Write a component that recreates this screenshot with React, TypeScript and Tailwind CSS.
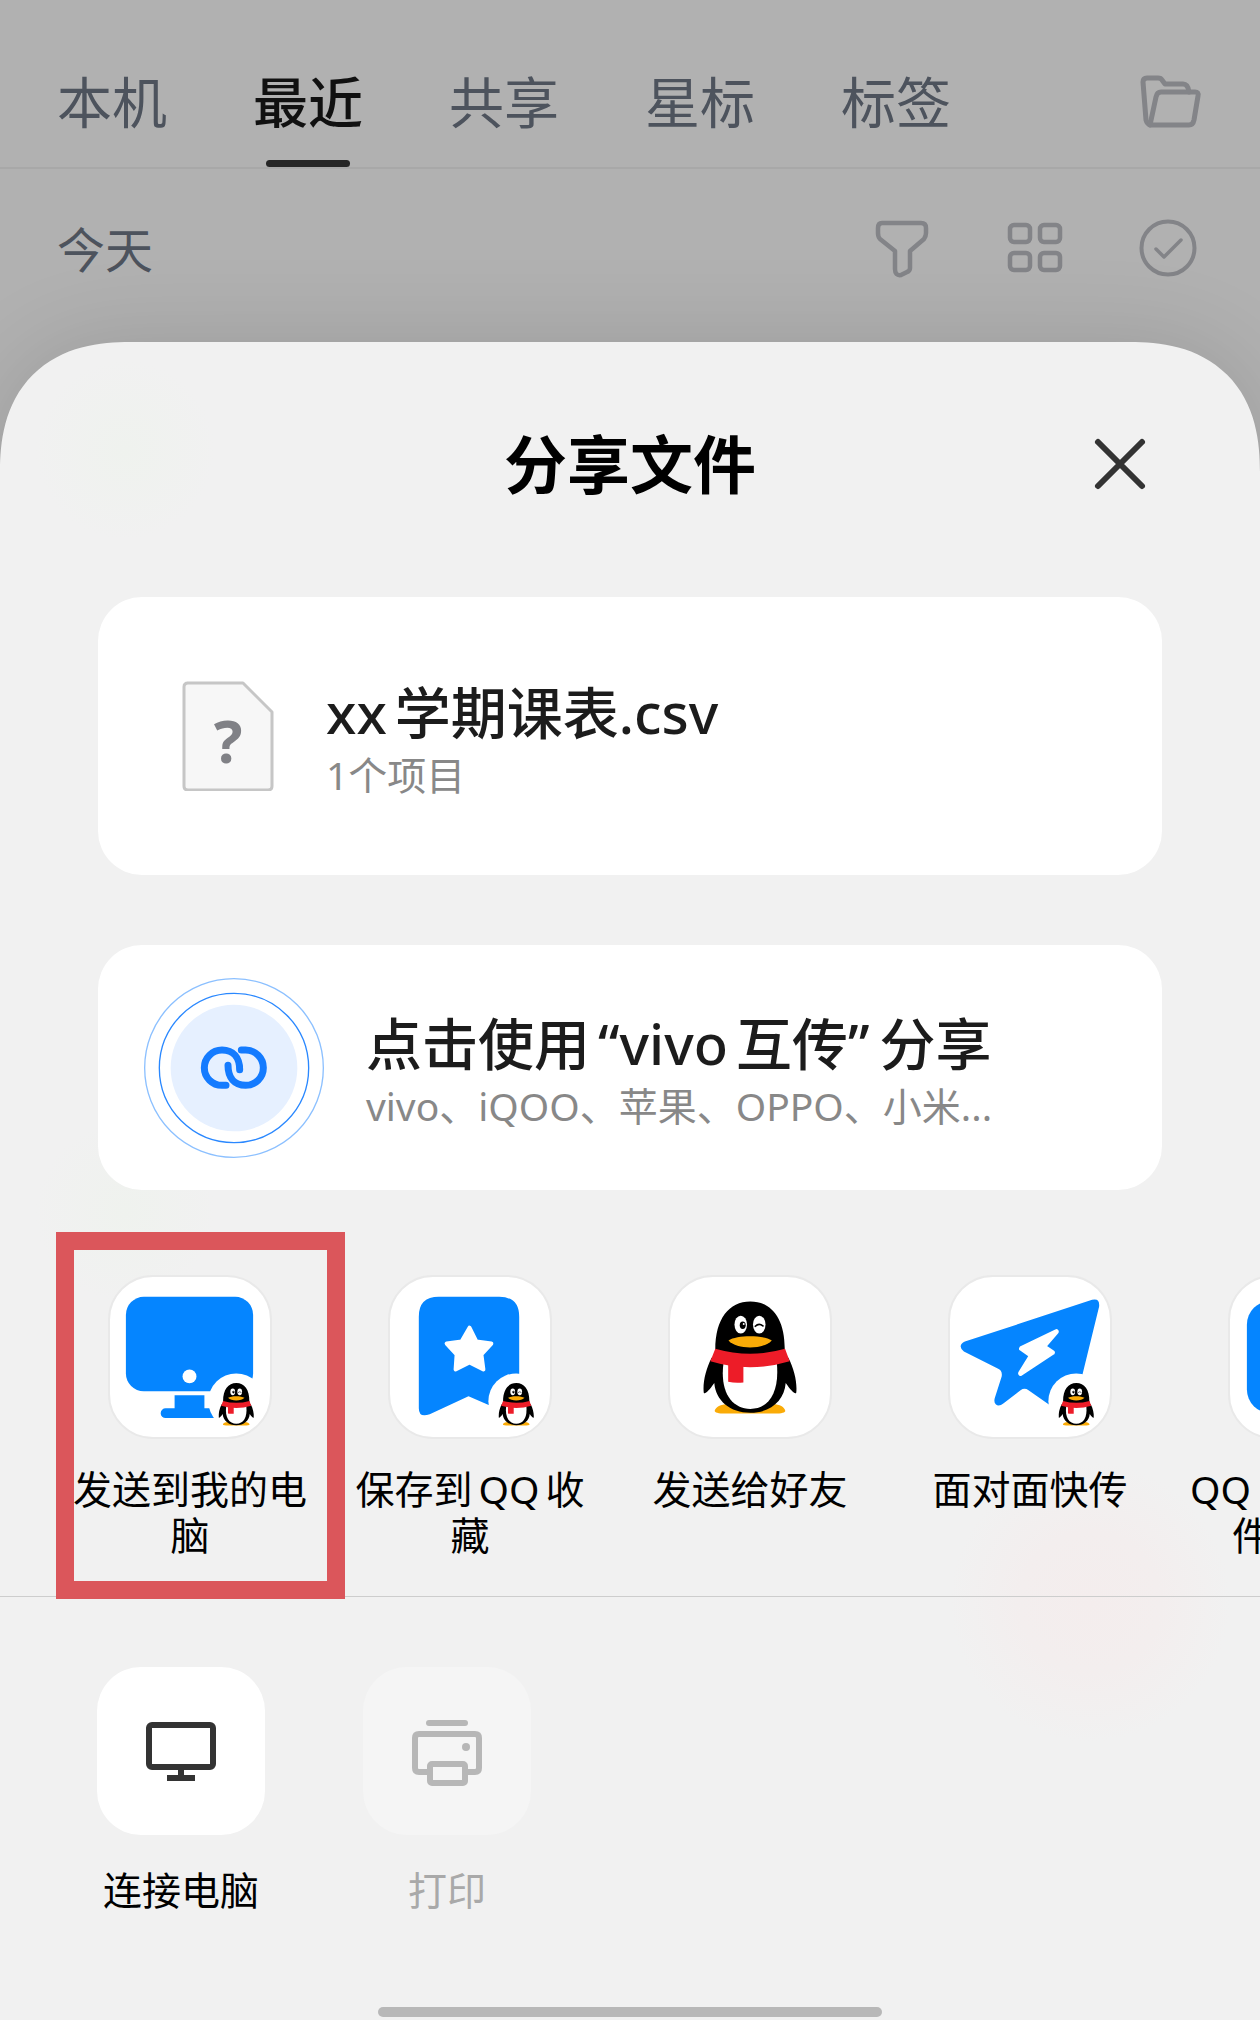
import * as React from "react";

interface ShareTarget {
  id: string;
  label: React.ReactNode;
  icon: React.FC;
  highlighted?: boolean;
}

const PenguinShape: React.FC = () => (
  <>
    <path d="M223 486C226 474 242 466 262 466L331 486L400 466C420 466 434 474 437 486C434 493 420 494 395 494H265C240 494 226 493 223 486Z" fill="#faab07" />
    <path d="M214 325C196 360 187 400 190 430C192 438 204 428 222 402C226 455 270 492 331 492S434 455 438 402C456 428 468 438 470 430C473 400 464 360 446 325Z" fill="#000" />
    <path d="M225 300C225 208 266 155 331 155S436 208 435 300L440 335H220Z" fill="#000" />
    <path d="M250 340H411C420 428 388 480 331 480S238 428 250 340Z" fill="#fff" />
    <ellipse cx="302" cy="225" rx="19" ry="27" fill="#fff" />
    <ellipse cx="358" cy="225" rx="19" ry="27" fill="#fff" />
    <ellipse cx="308" cy="227" rx="9" ry="11" fill="#000" />
    <circle cx="311" cy="223" r="3" fill="#fff" />
    <path d="M346 230Q357 219 369 229" fill="none" stroke="#000" strokeWidth="5" strokeLinecap="round" />
    <path d="M265 273C290 256 370 256 396 273C370 301 290 301 265 273Z" fill="#faab07" />
    <path d="M225 298Q331 328 436 298L450 336Q331 372 210 336Z" fill="#ed1c28" />
    <path d="M264 345H310V400Q286 403 264 398Z" fill="#ed1c28" />
  </>
);

const PenguinBadge: React.FC = () => (
  <>
    <circle cx="128" cy="126" r="28" fill="#fff" />
    <svg x="110" y="107" width="36" height="44" viewBox="187 153 286 343">
      <PenguinShape />
    </svg>
  </>
);

const ComputerIcon: React.FC = () => (
  <svg viewBox="0 0 163 163" className="size-full">
    <rect x="17" y="21" width="128" height="95" rx="18" fill="#0585ff" />
    <circle cx="81" cy="101" r="7" fill="#fff" />
    <path d="M66 120H96V133H112V143H57A5 5 0 0 1 57 133H66Z" fill="#0585ff" />
    <PenguinBadge />
  </svg>
);

const BookmarkIcon: React.FC = () => (
  <svg viewBox="0 0 163 163" className="size-full">
    <path d="M50 21H111Q131 21 131 41V134Q131 142 124 140L80 121L41 139Q30 143 30 133V41Q30 21 50 21Z" fill="#0585ff" />
    <path d="M81 52L88 66L103 68L93 79L95 94L81 87L67 94L68 79L58 68L73 66Z" fill="#fff" stroke="#fff" strokeWidth="4" strokeLinejoin="round" />
    <PenguinBadge />
  </svg>
);

const FriendIcon: React.FC = () => (
  <svg viewBox="87 78 486 490" className="size-full">
    <PenguinShape />
  </svg>
);

const PlaneIcon: React.FC = () => (
  <svg viewBox="0 0 163 163" className="size-full">
    <path
      d="M144 24Q152 22 151 31L125 137Q122 143 116 140L80 115Q76 112 72 115L55 128Q50 132 47 129Q45 127 46 123L53 101Q54 95 49 93L15 76Q8 70 16 66Z"
      fill="#0585ff"
    />
    <path d="M108 56L95 71L104 77L72 98L83 80L73 73Z" fill="#fff" stroke="#fff" strokeWidth="5" strokeLinejoin="round" />
    <PenguinBadge />
  </svg>
);

const FolderTileIcon: React.FC = () => (
  <svg viewBox="0 0 163 163" className="size-full">
    <rect x="18" y="25" width="127" height="113" rx="24" fill="#0585ff" />
    <PenguinBadge />
  </svg>
);

const FolderIcon: React.FC = () => (
  <svg viewBox="0 0 64 64" className="size-full" fill="none" stroke="#838488" strokeWidth="5" strokeLinejoin="round" strokeLinecap="round">
    <path d="M11 55Q8 54 7 50L4 12Q4 8 8 8H19Q22 8 23 10L26 14H44Q49 14 50 22" />
    <path d="M22 22H56Q60 22 59 26L55 50Q54 55 50 55H11L17 27Q18 22 22 22Z" />
  </svg>
);

const FilterIcon: React.FC = () => (
  <svg viewBox="0 0 64 64" className="size-full" fill="none" stroke="#838488" strokeWidth="4.5" strokeLinejoin="round">
    <path d="M9 5H48Q53 5 53 10V15Q53 18 51 21L37 33V50Q37 53 34 54L28 57Q22 58 22 51V33L7 21Q5 19 5 15V10Q5 5 9 5Z" />
  </svg>
);

const GridIcon: React.FC = () => (
  <svg viewBox="0 0 64 64" className="size-full" fill="none" stroke="#838488" strokeWidth="4.5">
    <rect x="4" y="7" width="20" height="17" rx="4" />
    <rect x="34" y="7" width="20" height="17" rx="4" />
    <rect x="4" y="35" width="20" height="17" rx="4" />
    <rect x="34" y="35" width="20" height="17" rx="4" />
  </svg>
);

const SelectIcon: React.FC = () => (
  <svg viewBox="0 0 64 64" className="size-full" fill="none" stroke="#838488" strokeWidth="4" strokeLinecap="round">
    <circle cx="29" cy="30" r="26.5" />
    <path d="M17 31L25 39L42 22" strokeWidth="3.5" strokeLinejoin="round" />
  </svg>
);

const CloseIcon: React.FC = () => (
  <svg viewBox="0 0 64 64" className="size-full" fill="none" stroke="#333" strokeWidth="6" strokeLinecap="round">
    <path d="M10 10L54 54M54 10L10 54" />
  </svg>
);

const UnknownFileIcon: React.FC = () => (
  <svg viewBox="0 0 92 110" className="h-[110px] w-[92px] shrink-0">
    <path d="M5 2H61L90 31V105Q90 109 86 109H6Q2 109 2 105V6Q2 2 6 2Z" fill="#f7f7f7" stroke="#c6c6c6" strokeWidth="3" strokeLinejoin="round" />
    <text x="46" y="82" textAnchor="middle" fontSize="60" fontWeight="700" fill="#808186">
      ?
    </text>
  </svg>
);

const LinkRingIcon: React.FC = () => (
  <svg viewBox="162 111 540 540" className="size-[180px] shrink-0" fill="none">
    <circle cx="432" cy="381" r="268" stroke="#8cc0ff" strokeWidth="4" />
    <circle cx="432" cy="381" r="224" stroke="#2a88ff" strokeWidth="4" />
    <circle cx="432" cy="381" r="190" fill="#e6f0ff" />
    <g stroke="#147bff" strokeWidth="21" strokeLinecap="round">
      <path d="M408 433H396A53 53 0 0 1 396 327C430 327 449 350 449 386" />
      <path d="M454 327H467A53 53 0 0 1 467 433C433 433 414 410 414 373" />
    </g>
  </svg>
);

const MonitorIcon: React.FC = () => (
  <svg viewBox="0 0 168 168" className="size-full" fill="none" stroke="#333" strokeWidth="6">
    <rect x="52" y="58" width="64" height="42" rx="3" />
    <path d="M84 101V110" />
    <path d="M70 111H98" />
  </svg>
);

const PrinterIcon: React.FC = () => (
  <svg viewBox="0 0 168 168" className="size-full" fill="none" stroke="#b7b7b7" strokeWidth="6">
    <path d="M66 56H102" strokeLinecap="round" />
    <path d="M67 105H56Q52 105 52 101V71Q52 67 56 67H112Q116 67 116 71V101Q116 105 112 105H102" />
    <rect x="67" y="97" width="35" height="19" rx="2" />
    <circle cx="103" cy="80" r="4" fill="#b7b7b7" stroke="none" />
  </svg>
);

const tabs = ["本机", "最近", "共享", "星标", "标签"];

const tools = [
  { name: "筛选", icon: FilterIcon },
  { name: "视图", icon: GridIcon },
  { name: "选择", icon: SelectIcon },
];

const targets: ShareTarget[] = [
  { id: "computer", label: "发送到我的电脑", icon: ComputerIcon, highlighted: true },
  {
    id: "favorite",
    label: (
      <>
        保存到<span className="mx-1.5">QQ</span>收藏
      </>
    ),
    icon: BookmarkIcon,
  },
  { id: "friend", label: "发送给好友", icon: FriendIcon },
  { id: "nearby", label: "面对面快传", icon: PlaneIcon },
  {
    id: "files",
    label: (
      <>
        <span className="mr-2">QQ</span>内部<span className="mx-2">AI</span>文件收藏夹
      </>
    ),
    icon: FolderTileIcon,
  },
];

const actions = [
  { label: "连接电脑", icon: MonitorIcon, disabled: false },
  { label: "打印", icon: PrinterIcon, disabled: true },
];

export default function App() {
  const [activeTab, setActiveTab] = React.useState("最近");

  return (
    <div
      lang="zh-CN"
      className="flex min-h-screen flex-col overflow-hidden bg-[#b1b1b1] font-['Noto_Sans','Noto_Sans_CJK_SC',sans-serif]">
      <header>
        <nav className="flex h-[169px] items-end justify-between border-b-2 border-[#a8a8a8] px-[57px]">
          <div className="flex gap-[86px]">
            {tabs.map((tab) => (
              <button
                key={tab}
                onClick={() => setActiveTab(tab)}
                className={`flex flex-col items-center gap-[22px] text-[55px] leading-[72px] whitespace-nowrap ${
                  tab === activeTab ? "font-medium text-[#111]" : "text-[#4d535d]"
                }`}>
                {tab}
                <span
                  className={`h-[7px] w-[84px] rounded-full ${
                    tab === activeTab ? "bg-[#262626]" : "bg-transparent"
                  }`}
                />
              </button>
            ))}
          </div>
          <button aria-label="文件夹" className="mb-[33px] size-16">
            <FolderIcon />
          </button>
        </nav>
        <div className="flex items-center justify-between px-[57px] pt-[45px] pb-14">
          <h2 className="text-[48px] leading-[72px] text-[#4d535d]">今天</h2>
          <div className="flex gap-[69px]">
            {tools.map((tool) => (
              <button key={tool.name} aria-label={tool.name} className="size-16">
                <tool.icon />
              </button>
            ))}
          </div>
        </div>
      </header>

      <section className="flex flex-1 flex-col overflow-hidden rounded-t-[130px] [corner-shape:superellipse(1.25)] bg-[#f1f1f1] bg-[radial-gradient(circle_at_1090px_1260px,#f4eded_0,#f3eeee_70px,#f1f1f100_140px),radial-gradient(circle_at_125px_108px,#eff2ee_0,#f1f1f100_90px),radial-gradient(circle_at_125px_870px,#eff2ee_0,#f1f1f100_90px)] shadow-[0_0_90px_rgba(0,0,0,0.13)]">
        <div className="grid grid-cols-[1fr_auto_1fr] items-center px-[108px] pt-[82px] pb-[93px]">
          <h1 className="col-start-2 text-[63px] leading-[80px] font-bold text-black">分享文件</h1>
          <button aria-label="关闭" className="size-16 justify-self-end">
            <CloseIcon />
          </button>
        </div>

        <div className="mx-[98px] flex flex-col gap-[70px]">
          <div className="flex h-[278px] items-center gap-[52px] rounded-[44px] bg-white pl-[84px]">
            <UnknownFileIcon />
            <div className="pt-1.5">
              <p className="text-[56px] leading-[72px] font-medium text-[#1c1c1c]">
                <span className="mr-2">xx</span>学期课表.csv
              </p>
              <p className="text-[39px] leading-[54px] text-[#888]">1个项目</p>
            </div>
          </div>

          <button className="flex h-[245px] items-center gap-[42px] rounded-[44px] bg-white pl-[46px] text-left">
            <LinkRingIcon />
            <span className="block pt-1">
              <span className="block text-[56px] leading-[72px] font-medium text-[#1c1c1c]">
                点击使用<span className="mx-2">“vivo</span>互传<span className="mr-2.5">”</span>分享
              </span>
              <span className="block text-[39px] leading-[54px] text-[#888]">
                vivo、iQOO、苹果、OPPO、小米...
              </span>
            </span>
          </button>
        </div>

        <ul className="flex gap-8 border-b border-[#cdcdcd] pt-[86px] pb-[38px] pl-[66px]">
          {targets.map((target) => (
            <li key={target.id} className="relative w-[248px] shrink-0">
              <button className="flex w-full flex-col items-center gap-7">
                <span className="size-[162px] overflow-hidden rounded-[44px] bg-white outline-2 -outline-offset-1 outline-[#e9e9e9]">
                  <target.icon />
                </span>
                <span className="text-center text-[39px] leading-[46px] text-black">
                  {target.label}
                </span>
              </button>
              {target.highlighted && (
                <span className="pointer-events-none absolute -top-11 -right-[31px] -bottom-[41px] -left-2.5 border-[18px] border-[#db565b]" />
              )}
            </li>
          ))}
        </ul>

        <div className="flex gap-[98px] pt-[70px] pl-[97px]">
          {actions.map((action) => (
            <button
              key={action.label}
              disabled={action.disabled}
              className="group flex w-[168px] flex-col items-center gap-8 text-[39px] leading-[46px] text-black disabled:text-[#a9a9a9]">
              <span className="size-[168px] rounded-[44px] bg-white group-disabled:bg-[#f5f5f5]">
                <action.icon />
              </span>
              {action.label}
            </button>
          ))}
        </div>

        <div className="mx-auto mt-auto mb-[3px] h-2.5 w-2/5 rounded-full bg-[#b8b8b8]" />
      </section>
    </div>
  );
}
